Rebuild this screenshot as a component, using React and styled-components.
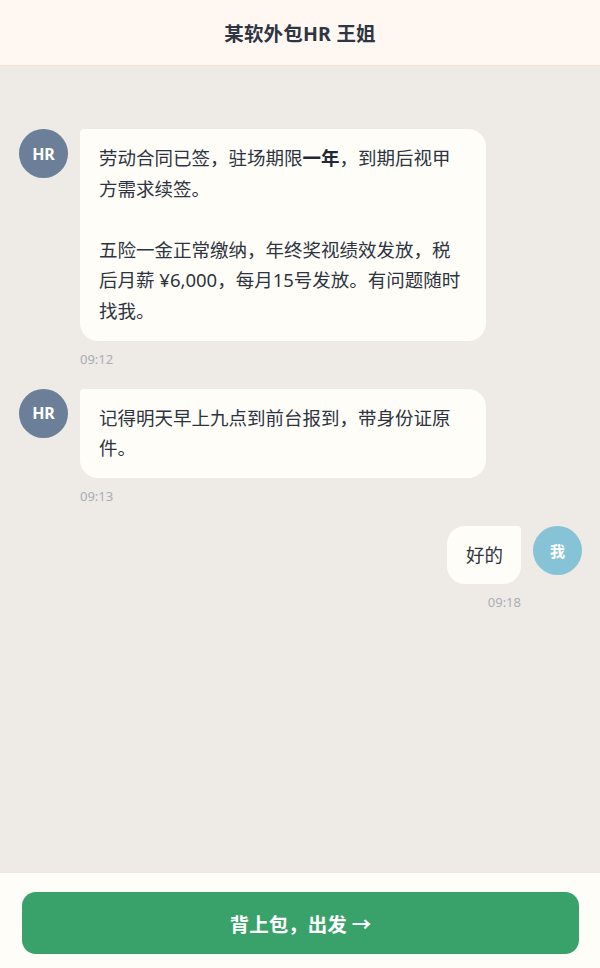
import React from 'react'
import styled, { createGlobalStyle } from 'styled-components'

const GlobalStyle = createGlobalStyle`
  * { box-sizing: border-box; }
  html, body { margin: 0; padding: 0; height: 100%; }
  body {
    font-family: "Noto Sans", "Noto Sans CJK SC", sans-serif;
    background: #eeeae5;
  }
  #root { height: 100%; }
`

const Page = styled.div`
  height: 968px;
  display: flex;
  flex-direction: column;
  background: #eeeae5;
`

const Header = styled.header`
  height: 66px;
  flex-shrink: 0;
  display: flex;
  align-items: center;
  justify-content: center;
  background: #fff8f2;
  border-bottom: 1px solid #efe3d8;
`

const Title = styled.h1`
  margin: 0;
  font-size: 19.5px;
  font-weight: 700;
  color: #2f3542;
  letter-spacing: 0.2px;
`

const Chat = styled.main`
  flex: 1;
  padding: 63px 18px 20px 19px;
  display: flex;
  flex-direction: column;
  gap: 20px;
`

const Row = styled.div`
  display: flex;
  align-items: flex-start;
  gap: 12px;
  flex-direction: ${p => (p.$mine ? 'row-reverse' : 'row')};
`

const Avatar = styled.div`
  width: 49px;
  height: 49px;
  border-radius: 50%;
  flex-shrink: 0;
  display: flex;
  align-items: center;
  justify-content: center;
  background: ${p => (p.$mine ? '#86c3d6' : '#6c7f99')};
  color: #fff;
  font-weight: 700;
  font-size: ${p => (p.$mine ? '15px' : '16px')};
`

const Column = styled.div`
  display: flex;
  flex-direction: column;
  align-items: ${p => (p.$mine ? 'flex-end' : 'flex-start')};
`

const Bubble = styled.div`
  max-width: 406px;
  padding: 14px 18px 14px 19px;
  background: #fefdf8;
  color: #2d3440;
  font-size: 18.5px;
  line-height: 30.6px;
  border-radius: ${p => (p.$mine ? '18px 4px 18px 18px' : '4px 18px 18px 18px')};
  white-space: pre-wrap;

  b { font-weight: 700; color: #222834; }
`

const Time = styled.div`
  margin-top: 8px;
  font-size: 13px;
  line-height: 20px;
  color: #a9aeb6;
`

const Footer = styled.footer`
  flex-shrink: 0;
  padding: 19px 21px 14px 22px;
  background: #fffdf8;
  border-top: 1px solid #ebe5dc;
`

const GoButton = styled.button`
  width: 100%;
  height: 62px;
  border: none;
  border-radius: 14px;
  background: #38a26a;
  color: #fff;
  font-family: "Noto Sans", "Noto Sans CJK SC", sans-serif;
  font-size: 19.5px;
  font-weight: 700;
  cursor: pointer;
`

const messages = [
  {
    mine: false,
    time: '09:12',
    body: (
      <>
        劳动合同已签，驻场期限<b>一年</b>，到期后视甲方需求续签。{'\n\n'}五险一金正常缴纳，年终奖视绩效发放，税后月薪 ¥6,000，每月15号发放。有问题随时找我。
      </>
    ),
  },
  { mine: false, time: '09:13', body: '记得明天早上九点到前台报到，带身份证原件。' },
  { mine: true, time: '09:18', body: '好的' },
]

const App = () => {
  return (
    <Page>
      <GlobalStyle />
      <Header>
        <Title>某软外包HR 王姐</Title>
      </Header>
      <Chat>
        {messages.map((m, i) => (
          <Row key={i} $mine={m.mine}>
            <Avatar $mine={m.mine}>{m.mine ? '我' : 'HR'}</Avatar>
            <Column $mine={m.mine}>
              <Bubble $mine={m.mine}>{m.body}</Bubble>
              <Time>{m.time}</Time>
            </Column>
          </Row>
        ))}
      </Chat>
      <Footer>
        <GoButton>背上包，出发 →</GoButton>
      </Footer>
    </Page>
  )
}

export default App
